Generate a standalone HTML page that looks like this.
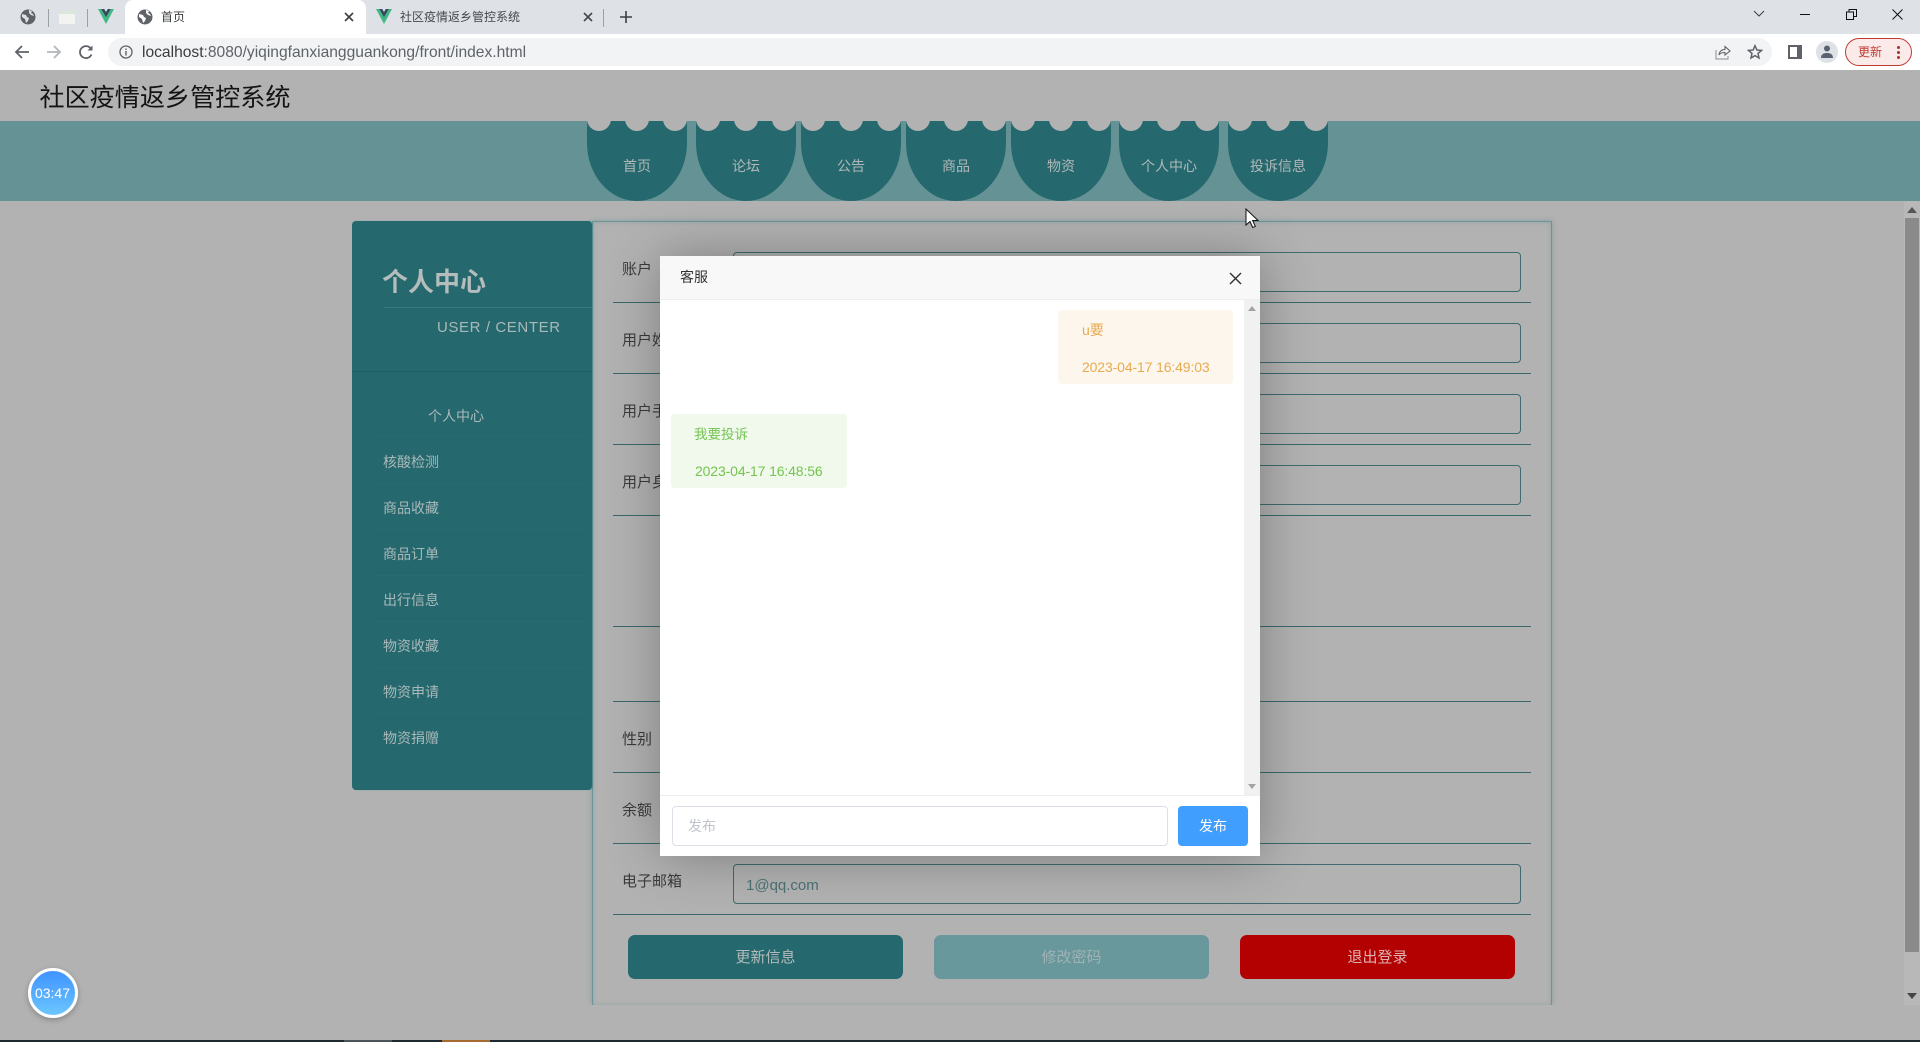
<!DOCTYPE html>
<html lang="zh-CN">
<head>
<meta charset="utf-8">
<title>首页</title>
<style>
html,body{margin:0;padding:0;width:1920px;height:1042px;overflow:hidden;background:#b2b2b2;}
body{position:relative;font-family:"Liberation Sans","Noto Sans CJK SC",sans-serif;font-size:14px;}
div,span,svg{position:absolute;box-sizing:border-box;}
.t{white-space:nowrap;line-height:20px;}
.nav{top:121px;width:100px;height:80px;background:#25686e;border-radius:0 0 50px 50px/0 0 58px 58px;overflow:hidden;}
.nav i{position:absolute;top:-14px;width:24px;height:24px;border-radius:50%;background:#b2b2b2;}
.nav i:nth-child(1){left:0}.nav i:nth-child(2){left:38px}.nav i:nth-child(3){left:76px}
.nav span{left:0;width:100%;text-align:center;top:35px;line-height:20px;color:#b0b9b9;font-size:14px;}
.ml{left:383px;color:#a9b9ba;font-size:14px;}
.ms{left:376px;width:210px;height:1px;background:#296d73;}
.line{left:613px;width:918px;height:1px;background:#3a686d;}
.inp{left:733px;width:788px;height:40px;border:1px solid #3f6b70;border-radius:4px;}
.lb{left:622px;color:#3b3b3b;font-size:15px;}
.btn{top:935px;height:44px;border-radius:7px;text-align:center;line-height:46px;font-size:15px;}
.dt{letter-spacing:-.13px;}
</style>
</head>
<body>
<!-- browser chrome -->
<div style="left:0;top:0;width:1920px;height:34px;background:#dee1e6"></div>
<div style="left:0;top:34px;width:1920px;height:36px;background:#fff"></div>
<div style="left:125px;top:0;width:241px;height:34px;background:#fff;border-radius:8px 8px 0 0"></div>

<svg style="left:20px;top:9px" width="16" height="16" viewBox="0 0 16 16"><circle cx="8" cy="8" r="7.5" fill="#5f6368"/><path d="M2 5l4 1 1 2 2 1-1 3-2 2-1-4-3-2zM9 1l3 1-1 2 2 1 1 2-3-1-2-2z" fill="#dee1e6"/></svg>
<div style="left:47.5px;top:9px;width:1px;height:18px;background:#9aa0a6"></div>
<div style="left:59px;top:11px;width:16px;height:13px;background:#f3f4f2;border-top:3px solid #d9e8d8"></div>
<div style="left:86.5px;top:9px;width:1px;height:18px;background:#9aa0a6"></div>
<svg style="left:98px;top:9px" width="16" height="15" viewBox="0 0 16 15"><path d="M0 0h3.200L8 8.300 12.800 0H16L8 15z" fill="#41b883"/><path d="M3.200 0h3L8 3 9.800 0h3L8 8.300z" fill="#34495e"/></svg>

<svg style="left:137px;top:9px" width="16" height="16" viewBox="0 0 16 16"><circle cx="8" cy="8" r="7.5" fill="#5f6368"/><path d="M2 5l4 1 1 2 2 1-1 3-2 2-1-4-3-2zM9 1l3 1-1 2 2 1 1 2-3-1-2-2z" fill="#fff"/></svg>
<span class="t" style="left:161px;top:7px;font-size:12px;color:#3c4043">首页</span>
<svg style="left:344px;top:12px" width="10" height="10" viewBox="0 0 10 10"><path d="M1 1l8 8M9 1l-8 8" stroke="#3c4043" stroke-width="1.6"/></svg>

<svg style="left:376px;top:9px" width="16" height="15" viewBox="0 0 16 15"><path d="M0 0h3.200L8 8.300 12.800 0H16L8 15z" fill="#41b883"/><path d="M3.200 0h3L8 3 9.800 0h3L8 8.300z" fill="#34495e"/></svg>
<span class="t" style="left:400px;top:7px;font-size:12px;color:#45494d">社区疫情返乡管控系统</span>
<svg style="left:583px;top:12px" width="10" height="10" viewBox="0 0 10 10"><path d="M1 1l8 8M9 1l-8 8" stroke="#45494d" stroke-width="1.6"/></svg>
<div style="left:603px;top:9px;width:1px;height:18px;background:#9aa0a6"></div>
<svg style="left:620px;top:11px" width="12" height="12" viewBox="0 0 12 12"><path d="M6 0v12M0 6h12" stroke="#3c4043" stroke-width="1.6"/></svg>

<svg style="left:1752px;top:9px" width="14" height="9" viewBox="0 0 14 9"><path d="M2 2l5 5 5-5" fill="none" stroke="#3c4043" stroke-width="1"/></svg>
<div style="left:1800px;top:14px;width:10px;height:1px;background:#111"></div>
<svg style="left:1846px;top:9px" width="11" height="11" viewBox="0 0 11 11"><path d="M.5 3h7v7.500h-7zM3 3V.5h7.500v7H8" fill="none" stroke="#111" stroke-width="1"/></svg>
<svg style="left:1892px;top:9px" width="11" height="11" viewBox="0 0 11 11"><path d="M.5.500l10 10M10.500.500l-10 10" stroke="#111" stroke-width="1"/></svg>

<svg style="left:14px;top:44px" width="16" height="16" viewBox="0 0 16 16"><path d="M15 8H2M8 2L2 8l6 6" fill="none" stroke="#5f6368" stroke-width="1.800"/></svg>
<svg style="left:46px;top:44px" width="16" height="16" viewBox="0 0 16 16"><path d="M1 8h13M8 2l6 6-6 6" fill="none" stroke="#b4b7ba" stroke-width="1.800"/></svg>
<svg style="left:78px;top:44px" width="16" height="16" viewBox="0 0 16 16"><path d="M13.500 10.500A6 6 0 1 1 13 4.800" fill="none" stroke="#5f6368" stroke-width="1.800"/><path d="M14.500 1.500v5h-5z" fill="#5f6368"/></svg>

<div style="left:108px;top:38px;width:1664px;height:28px;background:#f1f3f4;border-radius:14px"></div>
<svg style="left:119px;top:45px" width="14" height="14" viewBox="0 0 14 14"><circle cx="7" cy="7" r="6" fill="none" stroke="#5f6368" stroke-width="1.300"/><path d="M7 6v4.500M7 3.500v1.500" stroke="#5f6368" stroke-width="1.400"/></svg>
<span class="t" style="left:142px;top:43px;font-size:15.600px;color:#5f6368"><span style="position:static;color:#3a3c40">localhost</span>:8080/yiqingfanxiangguankong/front/index.html</span>

<svg style="left:1715px;top:44px" width="16" height="16" viewBox="0 0 16 16"><path d="M1 6v9h12v-3" fill="none" stroke="#8a8d91" stroke-width="1"/><path d="M4 11c.5-4 3-5.500 6-5.500V2.500l5 4.500-5 4V8.500c-3 0-5 .6-6 2.500z" fill="none" stroke="#5f6368" stroke-width="1.100"/></svg>
<svg style="left:1747px;top:44px" width="16" height="16" viewBox="0 0 16 16"><path d="M8 1.700l1.900 4.300 4.600.4-3.500 3 1 4.600L8 11.600 4 14l1-4.600-3.500-3 4.600-.4z" fill="none" stroke="#5f6368" stroke-width="1.500"/></svg>
<div style="left:1788px;top:45px;width:14px;height:14px;border:2px solid #5f6368;border-right-width:5px;background:#fff"></div>
<div style="left:1816px;top:41px;width:22px;height:22px;border-radius:50%;background:#dee1e6"></div>
<svg style="left:1820px;top:45px" width="14" height="13" viewBox="0 0 14 13"><circle cx="7" cy="3.500" r="3" fill="#5a6270"/><path d="M1 13c0-4 3-5 6-5s6 1 6 5z" fill="#5a6270"/></svg>
<div style="left:1845px;top:38px;width:67px;height:28px;border-radius:14px;background:#fbeaea;border:1px solid #c0392f"></div>
<span class="t" style="left:1858px;top:42px;font-size:12px;color:#c0392f">更新</span>
<div style="left:1897px;top:46px;width:3px;height:3px;border-radius:50%;background:#a8332d"></div>
<div style="left:1897px;top:51px;width:3px;height:3px;border-radius:50%;background:#a8332d"></div>
<div style="left:1897px;top:56px;width:3px;height:3px;border-radius:50%;background:#a8332d"></div>

<!-- page (dimmed) -->
<div style="left:0;top:70px;width:1920px;height:972px;background:#b2b2b2"></div>
<span class="t" style="left:39.500px;top:83px;font-size:25.100px;line-height:30px;color:#141414">社区疫情返乡管控系统</span>

<div style="left:0;top:121px;width:1920px;height:80px;background:#659395"></div>
<div class="nav" style="left:587px"><i></i><i></i><i></i><span>首页</span></div>
<div class="nav" style="left:696px"><i></i><i></i><i></i><span>论坛</span></div>
<div class="nav" style="left:801px"><i></i><i></i><i></i><span>公告</span></div>
<div class="nav" style="left:906px"><i></i><i></i><i></i><span>商品</span></div>
<div class="nav" style="left:1011px"><i></i><i></i><i></i><span>物资</span></div>
<div class="nav" style="left:1119px"><i></i><i></i><i></i><span>个人中心</span></div>
<div class="nav" style="left:1228px"><i></i><i></i><i></i><span>投诉信息</span></div>

<!-- panel, clipped at the scroll area's bottom (y=1005) -->
<div style="left:0;top:201px;width:1920px;height:804px;overflow:hidden">
  <div style="left:592px;top:20px;width:960px;height:784px;border:1px solid #6a9599;border-bottom:0;box-shadow:0 0 5px rgba(38,106,112,.3),inset 0 0 4px rgba(38,106,112,.22)"></div>
</div>

<!-- sidebar -->
<div style="left:352px;top:221px;width:240px;height:569px;background:#25686e;border-radius:4px;box-shadow:1px 0 1px rgba(60,130,135,.6)"></div>
<span class="t" style="left:382px;top:267px;font-size:26px;line-height:30px;font-weight:bold;color:#b4bcbc">个人中心</span>
<div style="left:384px;top:307px;width:208px;height:1px;background:#397a7f"></div>
<span class="t" style="left:437px;top:318px;font-size:15px;letter-spacing:.6px;color:#a9b9ba">USER / CENTER</span>
<div style="left:352px;top:371px;width:240px;height:1px;background:#225f65"></div>
<span class="t ml" style="left:428px;top:406px">个人中心</span>
<div class="ms" style="top:436px"></div>
<span class="t ml" style="top:452px">核酸检测</span>
<div class="ms" style="top:483px"></div>
<span class="t ml" style="top:498px">商品收藏</span>
<div class="ms" style="top:529px"></div>
<span class="t ml" style="top:544px">商品订单</span>
<div class="ms" style="top:575px"></div>
<span class="t ml" style="top:590px">出行信息</span>
<div class="ms" style="top:621px"></div>
<span class="t ml" style="top:636px">物资收藏</span>
<div class="ms" style="top:667px"></div>
<span class="t ml" style="top:682px">物资申请</span>
<div class="ms" style="top:713px"></div>
<span class="t ml" style="top:728px">物资捐赠</span>

<!-- form -->
<span class="t lb" style="top:260px">账户</span>
<div class="inp" style="top:252px"></div>
<div class="line" style="top:302px"></div>
<span class="t lb" style="top:331px">用户姓名</span>
<div class="inp" style="top:323px"></div>
<div class="line" style="top:373px"></div>
<span class="t lb" style="top:402px">用户手机</span>
<div class="inp" style="top:394px"></div>
<div class="line" style="top:444px"></div>
<span class="t lb" style="top:473px">用户身份证</span>
<div class="inp" style="top:465px"></div>
<div class="line" style="top:515px"></div>
<div class="line" style="top:626px"></div>
<div class="line" style="top:701px"></div>
<span class="t lb" style="top:730px">性别</span>
<div class="line" style="top:772px"></div>
<span class="t lb" style="top:801px">余额</span>
<div class="line" style="top:843px"></div>
<span class="t lb" style="top:872px">电子邮箱</span>
<div class="inp" style="top:864px"></div>
<span class="t" style="left:746px;top:876px;font-size:15px;color:#4b7276">1@qq.com</span>
<div class="line" style="top:914px"></div>
<div class="btn" style="left:628px;width:275px;background:#25686e;color:#b4bcbc">更新信息</div>
<div class="btn" style="left:934px;width:275px;background:#68979c;color:#9fb3b5">修改密码</div>
<div class="btn" style="left:1240px;width:275px;background:#b30000;color:#dcb2b2">退出登录</div>

<!-- page scrollbar -->
<div style="left:1904px;top:201px;width:16px;height:804px;background:#b8b8b8"></div>
<div style="left:1905px;top:218px;width:14px;height:734px;background:#8a8a8a"></div>
<svg style="left:1907px;top:207px" width="10" height="6" viewBox="0 0 10 6"><path d="M5 0l5 6H0z" fill="#555"/></svg>
<svg style="left:1907px;top:993px" width="10" height="6" viewBox="0 0 10 6"><path d="M0 0h10L5 6z" fill="#444"/></svg>

<!-- modal -->
<div style="left:660px;top:256px;width:600px;height:600px;background:#fff;box-shadow:1px 1px 50px rgba(0,0,0,.3)"></div>
<div style="left:660px;top:256px;width:600px;height:44px;background:#f8f8f8;border-bottom:1px solid #eee"></div>
<span class="t" style="left:680px;top:267px;font-size:14px;color:#333">客服</span>
<svg style="left:1229px;top:272px" width="13" height="13" viewBox="0 0 13 13"><path d="M1 1l11 11M12 1L1 12" stroke="#2f2f2f" stroke-width="1.400"/></svg>
<div style="left:1244px;top:300px;width:16px;height:495px;background:#f1f1f1"></div>
<svg style="left:1248px;top:306px" width="8" height="5" viewBox="0 0 8 5"><path d="M4 0l4 5H0z" fill="#a3a3a3"/></svg>
<svg style="left:1248px;top:784px" width="8" height="5" viewBox="0 0 8 5"><path d="M0 0h8L4 5z" fill="#a3a3a3"/></svg>

<div style="left:1058px;top:310px;width:175px;height:74px;background:#fdf6ec;border-radius:4px"></div>
<span class="t" style="left:1082px;top:320px;color:#e8aa52">u要</span>
<span class="t dt" style="left:1082px;top:357px;color:#e8aa52">2023-04-17 16:49:03</span>
<div style="left:671px;top:414px;width:176px;height:74px;background:#f0f9eb;border-radius:4px"></div>
<span class="t" style="left:694px;top:425px;font-size:13.500px;color:#74c450">我要投诉</span>
<span class="t dt" style="left:695px;top:461px;color:#74c450">2023-04-17 16:48:56</span>

<div style="left:660px;top:795px;width:600px;height:1px;background:#eee"></div>
<div style="left:672px;top:806px;width:496px;height:40px;background:#fff;border:1px solid #dcdfe6;border-radius:4px"></div>
<span class="t" style="left:688px;top:816px;color:#c0c4cc">发布</span>
<div style="left:1178px;top:806px;width:70px;height:40px;background:#409eff;border-radius:4px;color:#fff;text-align:center;line-height:40px">发布</div>

<!-- cursor -->
<svg style="left:1245px;top:208px" width="14" height="21" viewBox="0 0 14 21"><path d="M1 1v16l4-3.500 2.700 6 2.600-1.100-2.700-5.900H13z" fill="#fff" stroke="#111" stroke-width="1"/></svg>

<!-- timer -->
<div style="left:28px;top:968px;width:50px;height:50px;border-radius:50%;background:linear-gradient(180deg,#3f93ff 0%,#6cc6ff 100%);border:3px solid #fff;box-shadow:0 2px 6px rgba(0,0,0,.25);color:#fff;text-align:center;line-height:44px;font-size:14px;text-indent:-1px">03:47</div>

<!-- bottom edge -->
<div style="left:0;top:1040px;width:1920px;height:2px;background:#1e2a30"></div>
<div style="left:344px;top:1040px;width:48px;height:2px;background:#4a5357"></div>
<div style="left:442px;top:1040px;width:48px;height:2px;background:#a56a30"></div>
</body>
</html>
